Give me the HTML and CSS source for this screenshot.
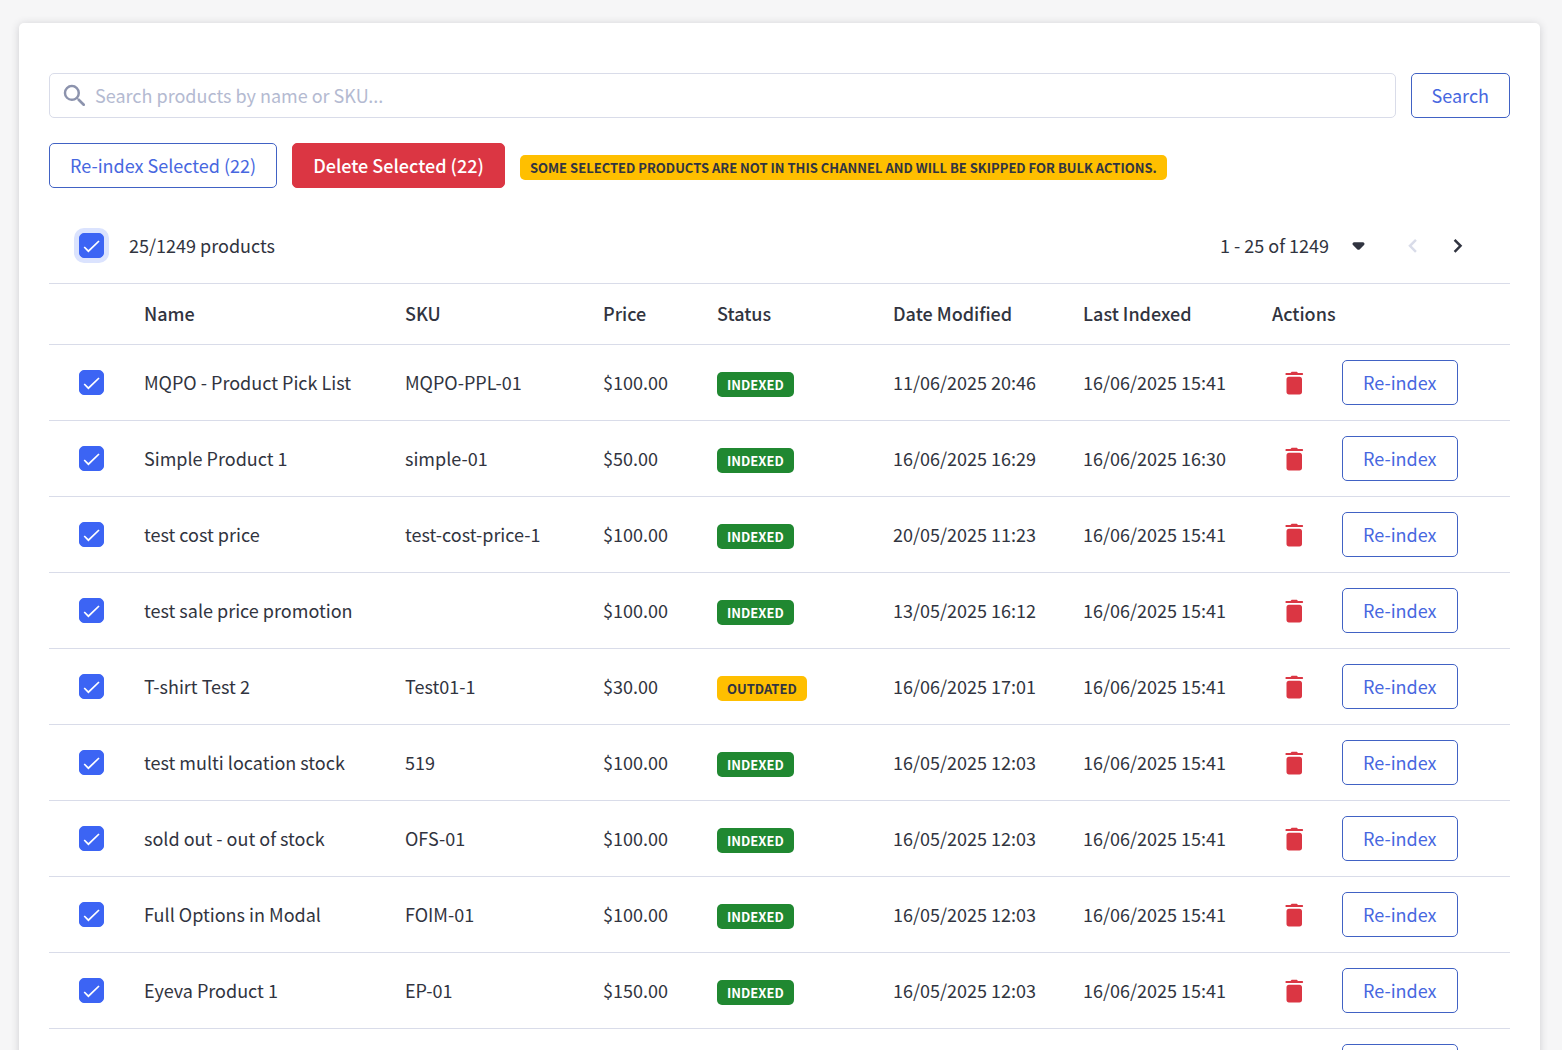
FILE: index.html
```html
<!DOCTYPE html>
<html lang="en">
<head>
    <meta charset="UTF-8">
    <meta name="viewport" content="width=device-width, initial-scale=1.0">
    <title>Products</title>
    <link rel="stylesheet" href="styles.css">
</head>
<body>
    <svg class="sprite" aria-hidden="true">
        <symbol id="icon-delete" viewBox="0 0 25 25">
            <path d="M4.500 22c0 1.500 1 2.500 2.500 2.500h10.500c1.500 0 2.500-1 2.500-2.500V9.200c0-1.500-1-2.500-2.500-2.500H7c-1.500 0-2.500 1-2.500 2.500zM8.500 2.900L9.200 2.200c.3-.3.600-.4 1-.4h4.100c.4 0 .7.1 1 .4l.7.7h4c.7 0 1.100.5 1.100 1.100s-.4 1.100-1.100 1.100h-15.500c-.7 0-1.100-.5-1.100-1.100s.4-1.100 1.100-1.100z"/>
        </symbol>
    </svg>

    <main class="panel">
        <form class="search-form">
            <div class="search-box">
                <svg class="search-icon" viewBox="0 0 24 24" aria-hidden="true">
                    <path d="M15.500 14h-.79l-.28-.27A6.471 6.471 0 0 0 16 9.500 6.500 6.500 0 1 0 9.500 16c1.610 0 3.090-.59 4.230-1.570l.27.28v.79l4.250 4.250c.41.41 1.080.41 1.490 0s.41-1.080 0-1.490L15.500 14zm-6 0C7.010 14 5 11.990 5 9.500S7.010 5 9.500 5 14 7.010 14 9.500 11.990 14 9.500 14z"/>
                </svg>
                <input type="text" class="search-input" aria-label="Search products" placeholder="Search products by name or SKU...">
            </div>
            <button type="button" class="btn">Search</button>
        </form>

        <div class="bulk-actions">
            <button type="button" class="btn">Re-index Selected (22)</button>
            <button type="button" class="btn btn-danger">Delete Selected (22)</button>
            <span class="badge badge-warning">Some selected products are not in this channel and will be skipped for bulk actions.</span>
        </div>

        <div class="table-toolbar">
            <label class="select-all">
                <input type="checkbox" class="checkbox checkbox-focus" checked>
                <span class="select-all-text">25/1249 products</span>
            </label>
            <div class="pagination">
                <button type="button" class="page-range">
                    <span class="page-range-text">1 - 25 of 1249</span>
                    <svg class="icon" viewBox="0 0 24 24" aria-hidden="true"><path d="M8 8.800h8c1.600 0 2.400 1.600 1.300 2.700l-4 4c-.7.7-1.900.7-2.600 0l-4-4C5.600 10.400 6.400 8.800 8 8.800z"/></svg>
                </button>
                <button type="button" class="page-btn" aria-label="Previous page" disabled>
                    <svg class="icon" viewBox="0 0 24 24" aria-hidden="true"><path class="chevron" d="M15.300 6.500L9.600 12.300l5.700 5.800"/></svg>
                </button>
                <button type="button" class="page-btn" aria-label="Next page">
                    <svg class="icon" viewBox="0 0 24 24" aria-hidden="true"><path class="chevron" d="M9.200 6.500l5.700 5.800-5.700 5.800"/></svg>
                </button>
            </div>
        </div>

        <table class="products">
            <thead>
                <tr>
                    <th class="col-check"></th>
                    <th>Name</th>
                    <th class="col-sku">SKU</th>
                    <th class="col-price">Price</th>
                    <th class="col-status">Status</th>
                    <th class="col-modified">Date Modified</th>
                    <th class="col-indexed">Last Indexed</th>
                    <th class="col-actions">Actions</th>
                </tr>
            </thead>
            <tbody>
                <tr>
                    <td class="col-check"><input type="checkbox" class="checkbox" aria-label="Select MQPO - Product Pick List" checked></td>
                    <td>MQPO - Product Pick List</td>
                    <td>MQPO-PPL-01</td>
                    <td>$100.00</td>
                    <td class="status"><span class="badge badge-success">Indexed</span></td>
                    <td>11/06/2025 20:46</td>
                    <td>16/06/2025 15:41</td>
                    <td class="col-actions"><div class="actions"><button type="button" class="delete-btn" aria-label="Delete"><svg class="icon"><use href="#icon-delete"/></svg></button><button type="button" class="btn">Re-index</button></div></td>
                </tr>
                <tr>
                    <td class="col-check"><input type="checkbox" class="checkbox" aria-label="Select Simple Product 1" checked></td>
                    <td>Simple Product 1</td>
                    <td>simple-01</td>
                    <td>$50.00</td>
                    <td class="status"><span class="badge badge-success">Indexed</span></td>
                    <td>16/06/2025 16:29</td>
                    <td>16/06/2025 16:30</td>
                    <td class="col-actions"><div class="actions"><button type="button" class="delete-btn" aria-label="Delete"><svg class="icon"><use href="#icon-delete"/></svg></button><button type="button" class="btn">Re-index</button></div></td>
                </tr>
                <tr>
                    <td class="col-check"><input type="checkbox" class="checkbox" aria-label="Select test cost price" checked></td>
                    <td>test cost price</td>
                    <td>test-cost-price-1</td>
                    <td>$100.00</td>
                    <td class="status"><span class="badge badge-success">Indexed</span></td>
                    <td>20/05/2025 11:23</td>
                    <td>16/06/2025 15:41</td>
                    <td class="col-actions"><div class="actions"><button type="button" class="delete-btn" aria-label="Delete"><svg class="icon"><use href="#icon-delete"/></svg></button><button type="button" class="btn">Re-index</button></div></td>
                </tr>
                <tr>
                    <td class="col-check"><input type="checkbox" class="checkbox" aria-label="Select test sale price promotion" checked></td>
                    <td>test sale price promotion</td>
                    <td></td>
                    <td>$100.00</td>
                    <td class="status"><span class="badge badge-success">Indexed</span></td>
                    <td>13/05/2025 16:12</td>
                    <td>16/06/2025 15:41</td>
                    <td class="col-actions"><div class="actions"><button type="button" class="delete-btn" aria-label="Delete"><svg class="icon"><use href="#icon-delete"/></svg></button><button type="button" class="btn">Re-index</button></div></td>
                </tr>
                <tr>
                    <td class="col-check"><input type="checkbox" class="checkbox" aria-label="Select T-shirt Test 2" checked></td>
                    <td>T-shirt Test 2</td>
                    <td>Test01-1</td>
                    <td>$30.00</td>
                    <td class="status"><span class="badge badge-warning">Outdated</span></td>
                    <td>16/06/2025 17:01</td>
                    <td>16/06/2025 15:41</td>
                    <td class="col-actions"><div class="actions"><button type="button" class="delete-btn" aria-label="Delete"><svg class="icon"><use href="#icon-delete"/></svg></button><button type="button" class="btn">Re-index</button></div></td>
                </tr>
                <tr>
                    <td class="col-check"><input type="checkbox" class="checkbox" aria-label="Select test multi location stock" checked></td>
                    <td>test multi location stock</td>
                    <td>519</td>
                    <td>$100.00</td>
                    <td class="status"><span class="badge badge-success">Indexed</span></td>
                    <td>16/05/2025 12:03</td>
                    <td>16/06/2025 15:41</td>
                    <td class="col-actions"><div class="actions"><button type="button" class="delete-btn" aria-label="Delete"><svg class="icon"><use href="#icon-delete"/></svg></button><button type="button" class="btn">Re-index</button></div></td>
                </tr>
                <tr>
                    <td class="col-check"><input type="checkbox" class="checkbox" aria-label="Select sold out - out of stock" checked></td>
                    <td>sold out - out of stock</td>
                    <td>OFS-01</td>
                    <td>$100.00</td>
                    <td class="status"><span class="badge badge-success">Indexed</span></td>
                    <td>16/05/2025 12:03</td>
                    <td>16/06/2025 15:41</td>
                    <td class="col-actions"><div class="actions"><button type="button" class="delete-btn" aria-label="Delete"><svg class="icon"><use href="#icon-delete"/></svg></button><button type="button" class="btn">Re-index</button></div></td>
                </tr>
                <tr>
                    <td class="col-check"><input type="checkbox" class="checkbox" aria-label="Select Full Options in Modal" checked></td>
                    <td>Full Options in Modal</td>
                    <td>FOIM-01</td>
                    <td>$100.00</td>
                    <td class="status"><span class="badge badge-success">Indexed</span></td>
                    <td>16/05/2025 12:03</td>
                    <td>16/06/2025 15:41</td>
                    <td class="col-actions"><div class="actions"><button type="button" class="delete-btn" aria-label="Delete"><svg class="icon"><use href="#icon-delete"/></svg></button><button type="button" class="btn">Re-index</button></div></td>
                </tr>
                <tr>
                    <td class="col-check"><input type="checkbox" class="checkbox" aria-label="Select Eyeva Product 1" checked></td>
                    <td>Eyeva Product 1</td>
                    <td>EP-01</td>
                    <td>$150.00</td>
                    <td class="status"><span class="badge badge-success">Indexed</span></td>
                    <td>16/05/2025 12:03</td>
                    <td>16/06/2025 15:41</td>
                    <td class="col-actions"><div class="actions"><button type="button" class="delete-btn" aria-label="Delete"><svg class="icon"><use href="#icon-delete"/></svg></button><button type="button" class="btn">Re-index</button></div></td>
                </tr>
                <tr>
                    <td class="col-check"><input type="checkbox" class="checkbox" aria-label="Select product" checked></td>
                    <td></td>
                    <td></td>
                    <td></td>
                    <td></td>
                    <td></td>
                    <td></td>
                    <td class="col-actions"><div class="actions"><button type="button" class="delete-btn" aria-label="Delete"><svg class="icon"><use href="#icon-delete"/></svg></button><button type="button" class="btn">Re-index</button></div></td>
                </tr>
            </tbody>
        </table>
    </main>
</body>
</html>
```
FILE: styles.css
```css
* {
    box-sizing: border-box;
}
body {
    margin: 0;
    padding: 23px 22px 23px 19px;
    background-color: #f6f6f7;
    color: #313440;
    font-family: "Source Sans Pro", "Noto Sans CJK SC", sans-serif;
    font-size: 18px;
    line-height: 24px;
}
button, input {
    font: inherit;
    color: inherit;
}
button {
    cursor: pointer;
}
.sprite {
    display: none;
}
.icon {
    display: block;
    width: 25px;
    height: 25px;
    fill: currentColor;
}
.panel {
    padding: 50px 30px 30px;
    background-color: #fff;
    border-radius: 5px;
    box-shadow: 0 1px 8px rgba(49, 52, 64, 0.2);
}
.search-form {
    display: flex;
    gap: 15px;
}
.search-box {
    flex: 1;
    display: flex;
    align-items: center;
    gap: 5px;
    height: 45px;
    padding: 0 10px;
    border: 1px solid #d9dce9;
    border-radius: 5px;
}
.search-icon {
    width: 30px;
    height: 30px;
    fill: #8c93ad;
}
.search-input {
    flex: 1;
    border: 0;
    padding: 0 0 2px;
    outline: none;
    background: none;
}
.search-input::placeholder {
    color: #b4bad1;
}
.btn {
    height: 45px;
    padding: 0 20px 2px;
    border: 1px solid #4162c4;
    border-radius: 5px;
    background-color: #fff;
    color: #4767e0;
    white-space: nowrap;
}
.btn-danger {
    border-color: #db3643;
    background-color: #db3643;
    color: #fff;
    font-weight: 500;
}
.bulk-actions {
    display: flex;
    align-items: center;
    gap: 15px;
    margin-top: 25px;
}
.badge {
    display: inline-block;
    margin-top: 4px;
    padding: 0 10px;
    border-radius: 5px;
    font-size: 13px;
    font-weight: bold;
    line-height: 25px;
    text-transform: uppercase;
    vertical-align: middle;
}
.badge-success {
    background-color: #208831;
    color: #fff;
}
.badge-warning {
    background-color: #ffbf00;
    color: #313440;
}
.table-toolbar {
    display: flex;
    justify-content: space-between;
    align-items: center;
    margin-top: 20px;
    padding: 15px 30px;
}
.select-all {
    display: flex;
    align-items: center;
    gap: 25px;
}
.select-all-text, .page-range-text {
    padding-bottom: 2px;
}
.checkbox {
    appearance: none;
    display: block;
    width: 25px;
    height: 25px;
    margin: 0;
    border: 1px solid #3c64f4;
    border-radius: 5px;
    background-color: #fff;
}
.checkbox:checked {
    background: #3c64f4 url("data:image/svg+xml,%3Csvg xmlns='http://www.w3.org/2000/svg' viewBox='0 0 23 23'%3E%3Cpath d='M4.200 13l4.200 4.200L19 7' fill='none' stroke='white' stroke-width='1.700'/%3E%3C/svg%3E") center / 100% no-repeat;
}
.checkbox-focus {
    box-shadow: 0 0 0 5px #dbe3fe;
}
.pagination {
    display: flex;
}
.page-range {
    display: flex;
    align-items: center;
    gap: 17px;
    height: 45px;
    padding: 0 19px;
    border: 0;
    background: none;
}
.page-btn {
    width: 45px;
    height: 45px;
    padding: 10px;
    border: 0;
    background: none;
}
.page-btn:disabled {
    color: #d9dce9;
}
.chevron {
    fill: none;
    stroke: currentColor;
    stroke-width: 2.400;
}
.products {
    width: 100%;
    border-collapse: separate;
    border-spacing: 0;
    table-layout: fixed;
    border-top: 1px solid #d9dce9;
}
.products th, .products td {
    padding: 0 15px 2px;
    border-bottom: 1px solid #d9dce9;
    text-align: left;
}
.products th {
    height: 61px;
    font-weight: 500;
}
.products td {
    height: 76px;
}
.products .col-check {
    width: 80px;
    padding-left: 30px;
}
.products td.col-check, .products td.status, .products td.col-actions {
    padding-bottom: 0;
}
.col-sku {
    width: 198px;
}
.col-price {
    width: 114px;
}
.col-status {
    width: 176px;
}
.col-modified {
    width: 190px;
}
.col-indexed {
    width: 189px;
}
.col-actions {
    width: 253px;
}
.actions {
    display: flex;
    gap: 25px;
}
.delete-btn {
    width: 45px;
    height: 45px;
    padding: 10px;
    border: 0;
    background: none;
    color: #db3643;
}
```
